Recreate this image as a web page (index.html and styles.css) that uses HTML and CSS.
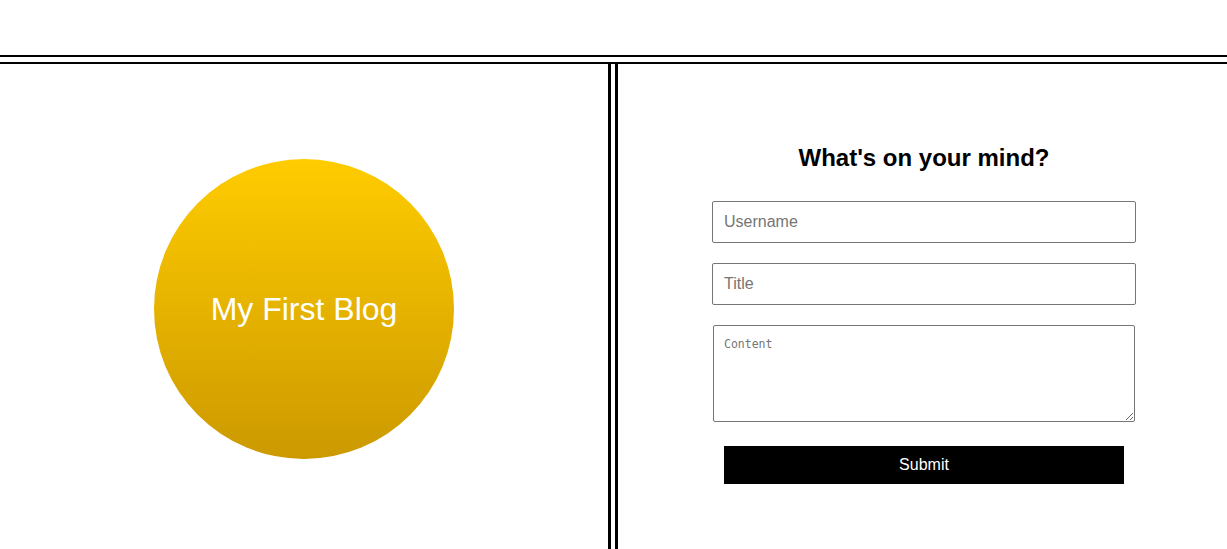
FILE: index.html
```html
<!DOCTYPE html>
<html lang="en">
<head>
<meta charset="utf-8">
<title>My First Blog</title>
<link rel="stylesheet" href="styles.css">
</head>
<body>
<header class="topbar"></header>
<main class="layout">
  <section class="hero">
    <div class="badge">My First Blog</div>
  </section>
  <section class="composer">
    <form class="post-form">
      <h2 class="post-title">What's on your mind?</h2>
      <input class="field" type="text" placeholder="Username">
      <input class="field" type="text" placeholder="Title">
      <textarea class="field-area" placeholder="Content"></textarea>
      <button class="submit" type="button">Submit</button>
    </form>
  </section>
</main>
</body>
</html>
```

FILE: styles.css
```css
html, body {
  margin: 0;
  padding: 0;
  background: #fff;
  font-family: "Liberation Sans", Arial, sans-serif;
  overflow: hidden;
}

.topbar {
  height: 55px;
  border-bottom: 2px solid #000;
}

.layout {
  margin-top: 5px;
  border-top: 2px solid #000;
  display: flex;
  height: 500px;
}

.hero {
  box-sizing: border-box;
  width: 611px;
  border-right: 3px solid #000;
  display: flex;
  justify-content: center;
  align-items: flex-start;
  padding-top: 95px;
}

.badge {
  width: 300px;
  height: 300px;
  border-radius: 50%;
  background: linear-gradient(to bottom, #ffcc00, #cc9900);
  color: #fff;
  font-size: 32px;
  display: flex;
  align-items: center;
  justify-content: center;
}

.composer {
  flex: 1;
  margin-left: 4px;
  border-left: 3px solid #000;
  padding-top: 80px;
}

.post-form {
  display: flex;
  flex-direction: column;
  align-items: center;
  padding-left: 3px;
}

.post-title {
  margin: 0 0 29px;
  font-size: 24px;
  line-height: 28px;
  font-weight: bold;
  color: #000;
}

.field {
  box-sizing: border-box;
  width: 424px;
  height: 42px;
  margin: 0 0 20px;
  padding: 0 11px;
  border: 1px solid #767676;
  border-radius: 2px;
  font-family: "Liberation Sans", Arial, sans-serif;
  font-size: 16px;
  color: #000;
}

.field::placeholder,
.field-area::placeholder {
  color: #757575;
}

.field-area {
  box-sizing: border-box;
  width: 422px;
  height: 97px;
  margin: 0 0 24px;
  padding: 11px 10px;
  border: 1px solid #767676;
  border-radius: 2px;
  font-family: "DejaVu Sans Mono", "Liberation Mono", monospace;
  font-size: 11.5px;
  resize: both;
}

.submit {
  width: 400px;
  height: 38px;
  border: none;
  background: #000;
  color: #fff;
  font-family: "Liberation Sans", Arial, sans-serif;
  font-size: 16px;
  cursor: pointer;
}
```
